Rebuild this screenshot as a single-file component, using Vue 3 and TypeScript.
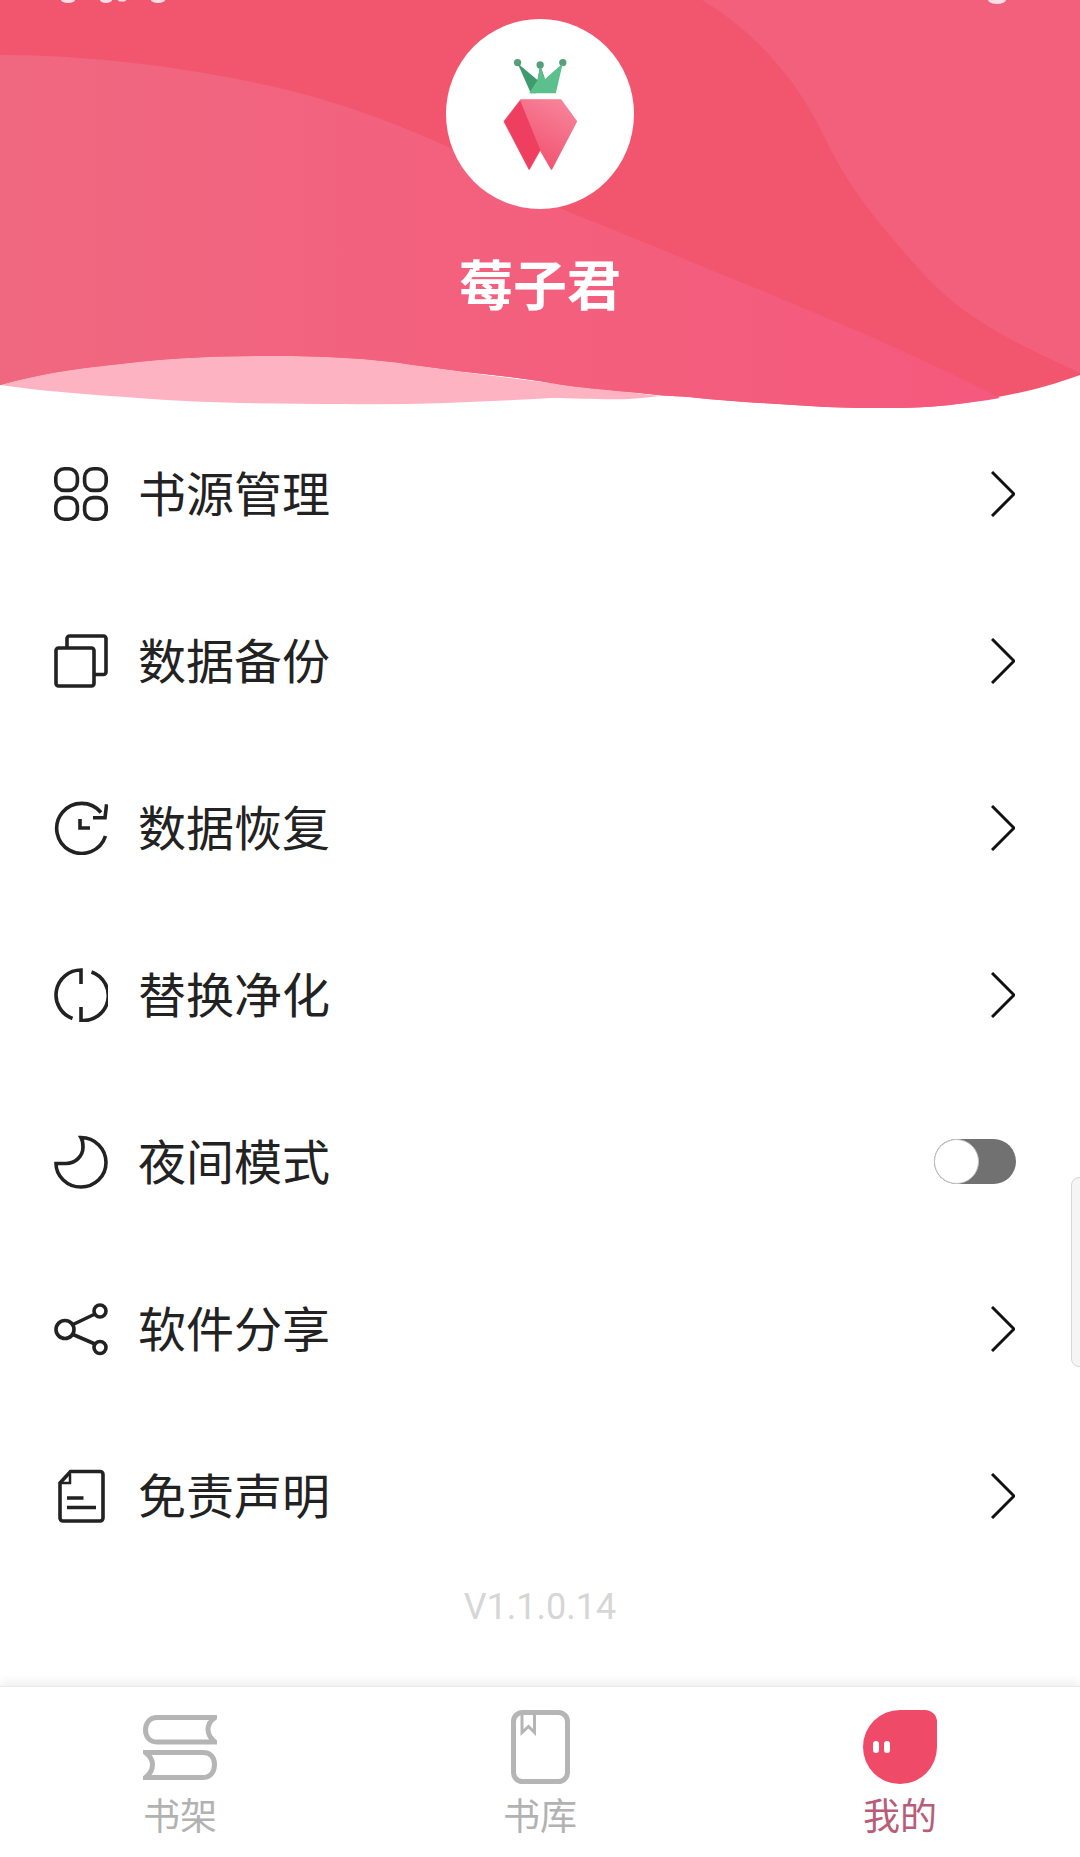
<script setup lang="ts">
type Row = { label: string; icon: string; toggle?: boolean };

const rows: Row[] = [
  { label: '书源管理', icon: 'grid' },
  { label: '数据备份', icon: 'copy' },
  { label: '数据恢复', icon: 'restore' },
  { label: '替换净化', icon: 'replace' },
  { label: '夜间模式', icon: 'moon', toggle: true },
  { label: '软件分享', icon: 'share' },
  { label: '免责声明', icon: 'doc' }
];
</script>

<template>
  <div class="page">
    <header class="hero">
      <svg class="hero-bg" viewBox="0 0 1080 410" preserveAspectRatio="none">
        <defs>
          <linearGradient id="leftWash" x1="0" y1="0" x2="1" y2="0">
            <stop offset="0" stop-color="#f06880" />
            <stop offset="0.5" stop-color="#f3607d" />
            <stop offset="1" stop-color="#f5597d" />
          </linearGradient>
        </defs>
        <path
          fill="#fdb3c1"
          d="M0 385C45 372 90 367 138 362C185 357 230 356 275 356C320 356 370 358 413 365C460 372 510 378 551 383C590 388 620 391 660 396C620 402 590 398 551 398C480 402 410 405 344 404C270 404 200 403 138 398C85 394 40 391 0 385Z"
        />
        <path
          fill="#f2566e"
          d="M0 0H1080V375C1050 386 1025 392 998 397C965 404 930 408 895 408C870 408 850 408 826 407C780 404 735 402 689 397C670 396 655 395 640 393C610 390 580 388 551 383C510 376 460 372 413 365C370 358 320 356 275 356C230 356 185 357 138 362C90 367 45 372 0 385Z"
        />
        <path
          fill="#f2607c"
          d="M702 0H1080V373C1020 345 964 320 920 270C880 225 850 190 826 140C800 85 760 35 702 0Z"
        />
        <path
          fill="url(#leftWash)"
          d="M0 55C100 55 200 70 275 87C340 102 400 125 448 147C490 170 530 195 571 213C640 240 690 262 760 290C830 320 895 345 1000 398C965 404 930 408 895 408C870 408 850 408 826 407C780 404 735 402 689 397C670 396 655 395 640 393C610 390 580 388 551 383C510 376 460 372 413 365C370 358 320 356 275 356C230 356 185 357 138 362C90 367 45 372 0 385Z"
        />
        <g fill="#fbdfe4">
          <ellipse cx="68" cy="0" rx="7" ry="3" />
          <ellipse cx="106" cy="0" rx="6" ry="3" />
          <ellipse cx="122" cy="0" rx="4" ry="1.5" />
          <ellipse cx="158" cy="0" rx="7" ry="3" />
          <ellipse cx="997" cy="0" rx="9" ry="4" />
        </g>
      </svg>
      <div class="avatar">
        <svg viewBox="75 28 565 569" width="188" height="190">
          <defs>
            <linearGradient id="berry" x1="0.2" y1="1" x2="0.8" y2="0">
              <stop offset="0" stop-color="#ef4a68" />
              <stop offset="1" stop-color="#f8839a" />
            </linearGradient>
          </defs>
          <circle cx="290" cy="158" r="11" fill="#55a07a" />
          <circle cx="358" cy="165" r="11" fill="#55a07a" />
          <circle cx="426" cy="158" r="11" fill="#55a07a" />
          <path fill="#3f9a6d" d="M290 160L350 210L358 165L372 205L345 250H330Z" />
          <path fill="#5cc08d" d="M426 160L405 250H325L350 210L358 170L372 208Z" />
          <path
            fill="url(#berry)"
            stroke="url(#berry)"
            stroke-width="4"
            stroke-linejoin="round"
            d="M300 270H420L467 335L392 478L358 420L325 478L250 335Z"
          />
          <path fill="#ee3f60" d="M298 272L358 420L325 478L250 335Z" />
        </svg>
      </div>
      <h1 class="name">莓子君</h1>
    </header>

    <ul class="menu">
      <li v-for="row in rows" :key="row.label" class="row">
        <svg class="row-icon" viewBox="0 0 54 54" fill="none">
          <g v-if="row.icon === 'grid'">
            <rect x="1.8" y="1.8" width="21.6" height="21.6" rx="8.5" />
            <rect x="30.6" y="1.8" width="21.6" height="21.6" rx="8.5" />
            <rect x="1.8" y="30.6" width="21.6" height="21.6" rx="8.5" />
            <rect x="30.6" y="30.6" width="21.6" height="21.6" rx="8.5" />
          </g>
          <g v-else-if="row.icon === 'copy'">
            <rect x="2" y="14" width="38" height="38" rx="2.5" />
            <path d="M13 13V4.5a2.5 2.5 0 0 1 2.5-2.5h34a2.5 2.5 0 0 1 2.5 2.5V38a2.5 2.5 0 0 1-2.5 2.5H40" />
          </g>
          <g v-else-if="row.icon === 'restore'">
            <path d="M47 11.5A25 25 0 1 0 51.5 35" />
            <path d="M52.6 3.3L51 16.7H39" />
            <path d="M26 18V27H36" />
          </g>
          <g v-else-if="row.icon === 'replace'">
            <path d="M27 16V2A25 25 0 0 0 18.5 50.5" />
            <path d="M27 39V52.5A25 25 0 0 0 37.5 4" />
          </g>
          <path
            v-else-if="row.icon === 'moon'"
            d="M27 2.5C41 2.5 52 14 52 27.5S41 52 27 52S2 41 2 28.5H12C21.5 28.5 29 21 29 12C29 8 28.5 5 27 2.5Z"
          />
          <g v-else-if="row.icon === 'share'">
            <circle cx="11" cy="27.5" r="9" />
            <circle cx="46" cy="9" r="6" />
            <circle cx="46" cy="45.5" r="6" />
            <path d="M19 22.5L41 12M19 32.5L41 42" />
          </g>
          <g v-else>
            <path d="M6 14L16.5 2.5H46a3 3 0 0 1 3 3V49a3 3 0 0 1-3 3H9a3 3 0 0 1-3-3Z" />
            <path d="M16 5V14H7" stroke-width="2.5" />
            <path d="M13 29H29.5M13 38.5H42" />
          </g>
        </svg>
        <span class="label">{{ row.label }}</span>
        <div v-if="row.toggle" class="switch"><i class="knob"></i></div>
        <svg v-else class="chevron" viewBox="0 0 24 46" fill="none">
          <path d="M1 1L23 23L1 45" />
        </svg>
      </li>
    </ul>

    <p class="version">V1.1.0.14</p>

    <nav class="tabs">
      <div class="tab">
        <div class="tab-icon">
          <svg viewBox="0 0 74 65" width="74" height="65" fill="none" class="tab-svg">
            <path d="M72 2.5H14C6 2.5 2.5 9 2.5 15S6 27 14 27H72C67 23 65 20 65 14.5S67 6 72 2.5Z" />
            <path d="M2.5 62.5H60C68 62.5 71.5 56 71.5 49.5S68 37.5 60 37.5H2.5C7 41 9.5 45 9.5 49.5S7 59 2.5 62.5Z" />
          </svg>
        </div>
        <span class="tab-label">书架</span>
      </div>
      <div class="tab">
        <div class="tab-icon">
          <svg viewBox="0 0 59 74" width="59" height="74" fill="none" class="tab-svg">
            <rect x="2.5" y="2.5" width="54" height="69" rx="9" />
            <path d="M11 3V22.5L17.5 16.5L23.5 22.5V3" stroke-width="3" />
          </svg>
        </div>
        <span class="tab-label">书库</span>
      </div>
      <div class="tab active">
        <div class="tab-icon">
          <div class="drop"><i></i><i></i></div>
        </div>
        <span class="tab-label">我的</span>
      </div>
    </nav>

    <div class="side-handle"></div>
  </div>
</template>

<style scoped>
.page {
  position: relative;
  width: 1080px;
  height: 1857px;
  background: #fff;
  overflow: hidden;
  display: flex;
  flex-direction: column;
  font-family: "Noto Sans CJK SC", "Noto Sans", sans-serif;
}

.hero {
  position: relative;
  height: 410px;
  flex-shrink: 0;
  display: flex;
  flex-direction: column;
  align-items: center;
  padding-top: 19px;
  box-sizing: border-box;
}

.hero-bg {
  position: absolute;
  left: 0;
  top: 0;
  width: 100%;
  height: 100%;
}

.avatar {
  position: relative;
  width: 188px;
  height: 190px;
  border-radius: 50%;
  background: #fff;
}

.avatar svg {
  display: block;
}

.name {
  position: relative;
  margin: 36px 0 0;
  font-size: 54px;
  line-height: 76px;
  font-weight: 700;
  color: #fff;
}

.menu {
  list-style: none;
  margin: 0;
  padding: 0 65px 0 54px;
}

.row {
  height: 167px;
  display: flex;
  align-items: center;
}

.row-icon {
  width: 54px;
  height: 54px;
  flex-shrink: 0;
  stroke: #222;
  stroke-width: 3.6;
}

.label {
  margin-left: 30px;
  padding-bottom: 6px;
  flex: 1;
  font-size: 48px;
  color: #222;
}

.chevron {
  width: 24px;
  height: 46px;
  stroke: #111;
  stroke-width: 3;
}

.switch {
  width: 82px;
  height: 45px;
  margin-right: -1px;
  border-radius: 23px;
  background: #717171;
}

.knob {
  display: block;
  width: 45px;
  height: 45px;
  box-sizing: border-box;
  border-radius: 50%;
  background: #fff;
  border: 1px solid #c4c4c4;
}

.version {
  margin: 2px 0 0;
  height: 52px;
  line-height: 52px;
  text-align: center;
  font-family: Roboto, "Noto Sans", sans-serif;
  font-size: 36px;
  color: #d6d6d6;
}

.tabs {
  margin-top: auto;
  height: 171px;
  box-sizing: border-box;
  padding-top: 23px;
  display: grid;
  grid-template-columns: repeat(3, 1fr);
  background: #fff;
  border-top: 1px solid #e8e8e8;
  box-shadow: 0 -4px 10px rgba(0, 0, 0, 0.07);
}

.tab {
  display: flex;
  flex-direction: column;
  align-items: center;
}

.tab-icon {
  height: 74px;
  display: flex;
  align-items: center;
  justify-content: center;
}

.tab-svg {
  stroke: #b5b5b5;
  stroke-width: 5;
}

.tab-label {
  margin-top: 5px;
  font-size: 37px;
  line-height: 50px;
  color: #b2b2b2;
}

.active .tab-label {
  color: #b85c78;
}

.drop {
  width: 74px;
  height: 74px;
  border-radius: 37px 12px 37px 37px;
  background: #ef4a68;
  display: flex;
  gap: 5px;
  padding: 31px 0 0 10px;
  box-sizing: border-box;
}

.drop i {
  width: 6px;
  height: 12px;
  border-radius: 3px;
  background: #fff;
}

.side-handle {
  position: absolute;
  top: 1177px;
  right: -10px;
  width: 19px;
  height: 190px;
  box-sizing: border-box;
  border: 1px solid #d8d8d8;
  border-radius: 8px;
  background: #f5f5f5;
}
</style>
